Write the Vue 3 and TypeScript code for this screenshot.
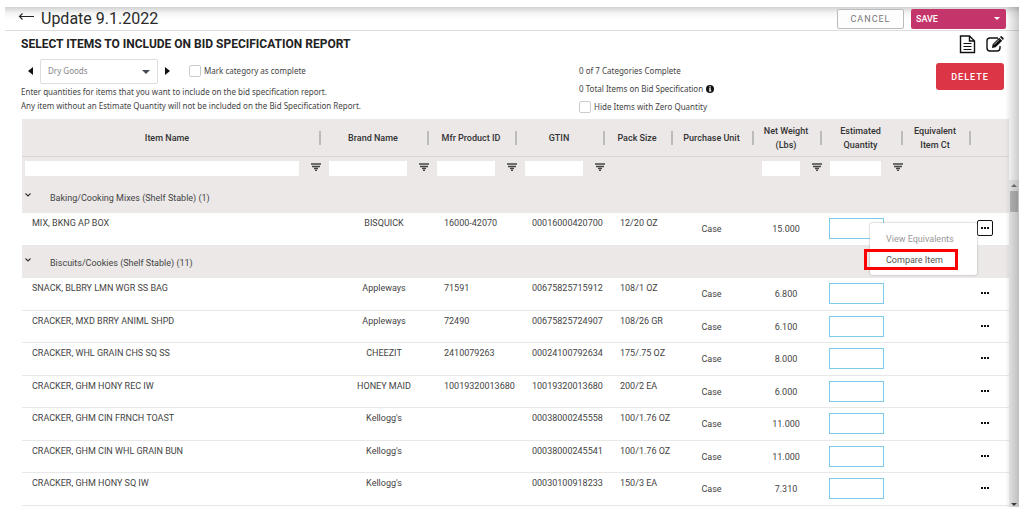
<script setup lang="ts">
import { ref } from 'vue'

interface Item {
  name: string
  brand: string
  mfr: string
  gtin: string
  pack: string
  unit: string
  weight: string
}
interface Group {
  title: string
  items: Item[]
}
interface Column {
  key: string
  label: string
  filter: boolean
}

const columns: Column[] = [
  { key: 'name', label: 'Item Name', filter: true },
  { key: 'brand', label: 'Brand Name', filter: true },
  { key: 'mfr', label: 'Mfr Product ID', filter: true },
  { key: 'gtin', label: 'GTIN', filter: true },
  { key: 'pack', label: 'Pack Size', filter: false },
  { key: 'unit', label: 'Purchase Unit', filter: false },
  { key: 'weight', label: 'Net Weight (Lbs)', filter: true },
  { key: 'qty', label: 'Estimated Quantity', filter: true },
  { key: 'equiv', label: 'Equivalent Item Ct', filter: false },
]

const groups: Group[] = [
  {
    title: 'Baking/Cooking Mixes (Shelf Stable) (1)',
    items: [
      { name: 'MIX, BKNG AP BOX', brand: 'BISQUICK', mfr: '16000-42070', gtin: '00016000420700', pack: '12/20 OZ', unit: 'Case', weight: '15.000' },
    ],
  },
  {
    title: 'Biscuits/Cookies (Shelf Stable) (11)',
    items: [
      { name: 'SNACK, BLBRY LMN WGR SS BAG', brand: 'Appleways', mfr: '71591', gtin: '00675825715912', pack: '108/1 OZ', unit: 'Case', weight: '6.800' },
      { name: 'CRACKER, MXD BRRY ANIML SHPD', brand: 'Appleways', mfr: '72490', gtin: '00675825724907', pack: '108/26 GR', unit: 'Case', weight: '6.100' },
      { name: 'CRACKER, WHL GRAIN CHS SQ SS', brand: 'CHEEZIT', mfr: '2410079263', gtin: '00024100792634', pack: '175/.75 OZ', unit: 'Case', weight: '8.000' },
      { name: 'CRACKER, GHM HONY REC IW', brand: 'HONEY MAID', mfr: '10019320013680', gtin: '10019320013680', pack: '200/2 EA', unit: 'Case', weight: '6.000' },
      { name: 'CRACKER, GHM CIN FRNCH TOAST', brand: "Kellogg's", mfr: '', gtin: '00038000245558', pack: '100/1.76 OZ', unit: 'Case', weight: '11.000' },
      { name: 'CRACKER, GHM CIN WHL GRAIN BUN', brand: "Kellogg's", mfr: '', gtin: '00038000245541', pack: '100/1.76 OZ', unit: 'Case', weight: '11.000' },
      { name: 'CRACKER, GHM HONY SQ IW', brand: "Kellogg's", mfr: '', gtin: '00030100918233', pack: '150/3 EA', unit: 'Case', weight: '7.310' },
    ],
  },
]

const category = ref('Dry Goods')
const openMenu = ref('MIX, BKNG AP BOX')
function toggleMenu(name: string) {
  openMenu.value = openMenu.value === name ? '' : name
}
</script>

<template>
  <div class="page">
    <header class="topbar">
      <button class="plain back" aria-label="Back">
        <svg width="17" height="9" viewBox="0 0 17 9"><path d="M16 4.500H1.500M4.500 1.500L1.500 4.500L4.500 7.500" fill="none" stroke="#222" stroke-width="1.100" /></svg>
      </button>
      <h1>Update 9.1.2022</h1>
      <button class="cancel">CANCEL</button>
      <button class="save">
        <span>SAVE</span>
        <svg width="6" height="3" viewBox="0 0 6 3"><path d="M0 0H6L3 3Z" fill="#fff" /></svg>
      </button>
    </header>

    <section class="intro">
      <div class="title-row">
        <h2>SELECT ITEMS TO INCLUDE ON BID SPECIFICATION REPORT</h2>
        <button class="plain" aria-label="View report">
          <svg width="17" height="19" viewBox="0 0 17 19"><path d="M1.500 1H10.500L15.500 6V17.500H1.500ZM10.500 1V6H15.500" fill="none" stroke="#111" stroke-width="1.400" /><path d="M4.500 8.500H12.500M4.500 11.500H12.500M4.500 14.500H12.500" stroke="#111" stroke-width="1.200" /></svg>
        </button>
        <button class="plain" aria-label="Edit">
          <svg width="18" height="16" viewBox="0 0 18 16"><path d="M12 2H4Q1 2 1 5V12Q1 15 4 15H11Q14 15 14 12V10" fill="none" stroke="#111" stroke-width="1.400" /><path d="M6 12L6.600 8.300L13.200 1.700L16.200 4.700L9.600 11.300ZM14 1L14.700 .3Q15.300 -.1 15.900 .4L17.500 2Q18 2.600 17.500 3.200L16.900 3.900Z" fill="#111" /><path d="M8 8.700L13 3.700" stroke="#fff" stroke-width=".7" /></svg>
        </button>
      </div>

      <div class="controls">
        <div class="left">
          <div class="picker">
            <button class="plain" aria-label="Previous category">
              <svg width="5" height="8" viewBox="0 0 5 8"><path d="M5 0V8L0 4Z" fill="#111" /></svg>
            </button>
            <div class="select">
              <select v-model="category" aria-label="Category">
                <option>Dry Goods</option>
              </select>
              <svg width="8" height="4" viewBox="0 0 8 4"><path d="M0 0H8L4 4Z" fill="#444c55" /></svg>
            </div>
            <button class="plain" aria-label="Next category">
              <svg width="5" height="8" viewBox="0 0 5 8"><path d="M0 0V8L5 4Z" fill="#111" /></svg>
            </button>
            <label class="check complete"><input type="checkbox" />Mark category as complete</label>
          </div>
          <p>Enter quantities for items that you want to include on the bid specification report.<br />Any item without an Estimate Quantity will not be included on the Bid Specification Report.</p>
        </div>
        <div class="summary">
          <div>0 of 7 Categories Complete</div>
          <div class="info">
            0 Total Items on Bid Specification
            <svg width="8" height="8" viewBox="0 0 8 8"><circle cx="4" cy="4" r="4" fill="#111" /><path d="M3.300 1.300H4.800V2.400H3.300ZM2.900 3.200H4.800V5.600H5.300V6.500H2.900V5.600H3.400V4.100H2.900Z" fill="#fff" /></svg>
          </div>
          <label class="check"><input type="checkbox" />Hide Items with Zero Quantity</label>
        </div>
        <button class="delete">DELETE</button>
      </div>
    </section>

    <div class="grid">
      <div class="table-wrap">
        <table>
          <colgroup>
            <col />
            <col class="w-brand" />
            <col class="w-id" />
            <col class="w-id" />
            <col class="w-small" />
            <col class="w-mid" />
            <col class="w-small" />
            <col class="w-mid" />
            <col class="w-small" />
            <col class="w-action" />
          </colgroup>
          <thead>
            <tr class="labels">
              <th v-for="c in columns" :key="c.key" scope="col"><div>{{ c.label }}</div></th>
              <td></td>
            </tr>
            <tr class="filters">
              <td v-for="c in columns" :key="c.key">
                <div v-if="c.filter" class="filter">
                  <input type="text" :aria-label="'Filter ' + c.label" />
                  <button class="plain" :aria-label="'Filter options for ' + c.label">
                    <svg width="10" height="8" viewBox="0 0 10 8"><path d="M0 1H10M1 3.500H9M3 5.500H7M4 7.300H6" stroke="#444" stroke-width="1.300" /></svg>
                  </button>
                </div>
              </td>
              <td></td>
            </tr>
          </thead>
          <tbody v-for="g in groups" :key="g.title">
            <tr class="group">
              <td colspan="10">
                <div>
                  <button class="plain" :aria-label="'Collapse ' + g.title">
                    <svg width="6" height="4" viewBox="0 0 6 4"><path d="M.5 .5L3 3L5.500 .5" fill="none" stroke="#333" stroke-width="1.100" /></svg>
                  </button>
                  <span>{{ g.title }}</span>
                </div>
              </td>
            </tr>
            <tr v-for="i in g.items" :key="i.name" class="item">
              <td>{{ i.name }}</td>
              <td class="brand">{{ i.brand }}</td>
              <td>{{ i.mfr }}</td>
              <td>{{ i.gtin }}</td>
              <td>{{ i.pack }}</td>
              <td class="mid">{{ i.unit }}</td>
              <td class="mid">{{ i.weight }}</td>
              <td class="qty"><input type="text" :aria-label="'Estimated quantity for ' + i.name" /></td>
              <td></td>
              <td class="action">
                <div>
                  <button class="plain more" :class="{ open: openMenu === i.name }" :aria-label="'Actions for ' + i.name" @click="toggleMenu(i.name)">
                    <svg width="8" height="2" viewBox="0 0 8 2"><path d="M0 0H2V2H0ZM3 0H5V2H3ZM6 0H8V2H6Z" fill="#111" /></svg>
                  </button>
                  <div v-if="openMenu === i.name" class="menu">
                    <button disabled>View Equivalents</button>
                    <button class="marked">Compare Item</button>
                  </div>
                </div>
              </td>
            </tr>
          </tbody>
        </table>
      </div>
      <div class="scrollbar" aria-hidden="true">
        <svg width="6" height="3" viewBox="0 0 6 3"><path d="M0 3H6L3 0Z" fill="#777" /></svg>
        <div class="thumb"></div>
        <svg width="6" height="3" viewBox="0 0 6 3"><path d="M0 0H6L3 3Z" fill="#444" /></svg>
      </div>
    </div>
    <div class="edge"></div>
  </div>
</template>

<style>
body {
  margin: 0;
  background: #fff;
}
</style>

<style scoped>
* {
  box-sizing: border-box;
}
.page {
  position: relative;
  display: flex;
  flex-direction: column;
  height: 100vh;
  padding: 7px 2px 0 5px;
  overflow: hidden;
  font-family: Roboto, "Liberation Sans", sans-serif;
  font-size: 9px;
  color: #444;
}
button,
input,
select {
  font: inherit;
  color: inherit;
}
.plain {
  display: flex;
  align-items: center;
  justify-content: center;
  padding: 0;
  border: 0;
  background: none;
}
.topbar {
  display: flex;
  align-items: center;
  height: 24px;
  padding: 0 13px;
  border-bottom: 1px solid #ddd;
  background: linear-gradient(#d2d2d2, #f4f4f4 6px, #fff 12px);
}
.back {
  height: 20px;
  align-items: flex-start;
  padding-top: 3px;
}
h1 {
  flex: 1;
  margin: 0 0 0 6px;
  font-size: 16px;
  line-height: 20px;
  font-weight: 400;
  color: #2a2a2a;
}
.cancel {
  width: 67px;
  height: 20px;
  padding: 0;
  border: 1px solid #bbb;
  border-radius: 2px;
  background: #fdfdfd;
  letter-spacing: 1px;
  color: #777;
}
.save {
  display: flex;
  align-items: center;
  justify-content: space-between;
  width: 95px;
  height: 20px;
  margin-left: 7px;
  padding: 0 6px 0 5px;
  border: 0;
  border-radius: 2px;
  background: #c4356b;
  font-weight: 500;
  color: #fff;
}
.intro {
  padding: 0 15px 0 16px;
}
.title-row {
  display: flex;
  align-items: center;
  gap: 10px;
  height: 26px;
}
h2 {
  flex: 1;
  margin: 0;
  font-size: 12px;
  font-weight: 700;
  color: #222;
}
.controls {
  display: flex;
  align-items: flex-start;
  height: 62px;
  font-family: "Noto Sans", "Open Sans", sans-serif;
  font-size: 8px;
  line-height: 14px;
}
.left {
  width: 558px;
}
.picker {
  display: flex;
  align-items: center;
  gap: 7px;
  height: 28px;
  padding-left: 7px;
}
.select {
  position: relative;
  width: 118px;
}
.select select {
  display: block;
  width: 100%;
  height: 25px;
  padding: 0 7px;
  border: 1px solid #ddd;
  border-radius: 2px;
  appearance: none;
  background: #fff;
  color: #888;
}
.select svg {
  position: absolute;
  top: 11px;
  right: 8px;
  pointer-events: none;
}
.check {
  display: flex;
  align-items: center;
  gap: 3px;
}
.check input {
  width: 12px;
  height: 12px;
  margin: 0;
  border: 1px solid #ccc;
  border-radius: 2px;
  appearance: none;
  background: #fff;
}
.complete {
  margin-left: 12px;
}
p {
  margin: 0;
}
.summary {
  flex: 1;
  display: grid;
  gap: 4px;
  padding-top: 7px;
}
.info {
  display: flex;
  align-items: center;
  gap: 3px;
}
.delete {
  width: 68px;
  height: 27px;
  margin-top: 6px;
  padding: 0;
  border: 0;
  border-radius: 3px;
  background: #dc3545;
  font-family: Roboto, sans-serif;
  font-size: 9px;
  font-weight: 500;
  letter-spacing: 1px;
  color: #fff;
}
.grid {
  flex: 1;
  display: flex;
  min-height: 0;
  padding-left: 17px;
}
.table-wrap {
  flex: 1;
  min-width: 0;
}
table {
  width: 100%;
  table-layout: fixed;
  border-spacing: 0;
}
.w-brand { width: 108px; }
.w-id { width: 88px; }
.w-small { width: 68px; }
.w-mid { width: 81px; }
.w-action { width: 33px; }
td,
th {
  padding: 0;
}
.labels > *,
.filters > *,
.group > * {
  background: #ebe8e7;
}
.labels > * {
  height: 38px;
  border-bottom: 1px solid #d6d6d6;
}
.labels div {
  display: flex;
  align-items: center;
  justify-content: center;
  height: 14px;
  padding-right: 7px;
  margin-right: 5px;
  border-right: 2px solid #bbb;
  font-weight: 500;
  line-height: 14px;
  color: #333;
}
.filters > * {
  height: 24px;
  padding-top: 4px;
  vertical-align: top;
}
.filter {
  display: flex;
  align-items: flex-start;
  padding: 0 5px 0 3px;
}
.filter button {
  margin-top: 2px;
}
.filter input {
  flex: 1;
  min-width: 0;
  height: 15px;
  margin-right: 12px;
  padding: 0;
  border: 0;
  background: #fff;
}
.group td {
  height: 32px;
  vertical-align: top;
}
.group div {
  display: flex;
  align-items: flex-start;
  gap: 19px;
  padding: 11px 0 0 3px;
  line-height: 12px;
}
.group button {
  padding-top: 1px;
}
.item td {
  height: 33px;
  padding: 4px 0 0 10px;
  border-bottom: 1px solid #e8e8e8;
  vertical-align: top;
  line-height: 12px;
  white-space: nowrap;
}
.item:nth-child(odd) td {
  height: 32px;
}
.item .brand {
  padding-left: 8px;
  text-align: center;
}
.item .mid {
  padding: 0 14px 0 0;
  text-align: center;
  vertical-align: middle;
}
.item .qty {
  padding: 5px 0 0 2px;
}
.qty input {
  display: block;
  width: 55px;
  height: 21px;
  border: 1px solid #7ccbea;
  background: #fff;
}
.item .action {
  padding: 7px 0 0;
}
.action > div {
  position: relative;
  display: flex;
  padding-left: 1px;
}
.more {
  width: 16px;
  height: 16px;
  border-radius: 2px;
}
.more.open {
  border: 1px solid #111;
}
.menu {
  position: absolute;
  z-index: 1;
  top: 3px;
  right: 32px;
  width: 107px;
  padding: 5px 0;
  border-radius: 2px;
  background: #fff;
  box-shadow: 0 0 2px #999;
}
.menu button {
  display: block;
  width: 100%;
  height: 21px;
  padding: 0 16px;
  border: 0;
  background: none;
  text-align: left;
  color: #555;
}
.menu button:disabled {
  color: #999;
}
.menu .marked {
  position: relative;
}
.marked::after {
  content: "";
  position: absolute;
  inset: 0 19px 0 -6px;
  border: 3px solid #f00;
}
.scrollbar {
  display: flex;
  flex-direction: column;
  align-items: center;
  width: 10px;
  margin-top: 61px;
  padding: 4px 0 1px;
  background: #eee;
}
.thumb {
  width: 8px;
  height: 21px;
  margin: 4px 0 auto;
  background: #bbb;
}
.edge {
  position: absolute;
  z-index: 2;
  inset: 7px 2px 0 auto;
  width: 14px;
  background: linear-gradient(to right, transparent, rgba(0, 0, 0, 0.2));
  pointer-events: none;
}
</style>
